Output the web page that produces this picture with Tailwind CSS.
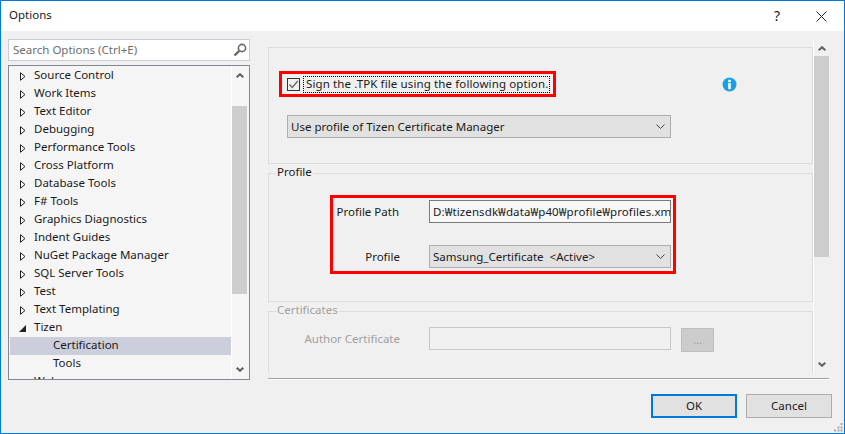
<!DOCTYPE html>
<html lang="en">
<head>
  <meta charset="UTF-8" />
  <title>Options</title>
  <script src="https://cdn.jsdelivr.net/npm/@tailwindcss/browser@4"></script>
</head>
<body class="overflow-hidden bg-[#f0f0f0]">
  <div class="w-[845px] h-[434px] flex flex-col border border-[#0078d7] bg-[#f0f0f0] text-[11.5px] leading-[16px] text-[#1a1a1a] font-['Noto_Sans',sans-serif] overflow-hidden">

    <!-- Title bar -->
    <div class="h-[30px] shrink-0 bg-white flex items-center pl-[8px]">
      <span class="flex-1 -translate-y-px">Options</span>
      <span class="text-[14px] w-[10px] mr-[34px] text-center">?</span>
      <svg class="mr-[17px]" width="11" height="11" viewBox="0 0 11 11" fill="none" stroke="#222" stroke-width="1"><path d="M0.5 0.5L10.5 10.5M10.5 0.5L0.5 10.5"/></svg>
    </div>

    <!-- Main -->
    <div class="h-[349px] shrink-0 flex">
      <!-- Left column -->
      <div class="w-[249px] ml-[7px] pt-[8px] shrink-0 flex flex-col">
        <div class="w-[242px] h-[22px] bg-white border border-[#c8ccd4] flex items-center pl-[4px] pr-[2px] justify-between text-[#6d6d6d]">
          <span>Search Options (Ctrl+E)</span>
          <svg width="14" height="14" viewBox="0 0 14 14" fill="none" stroke="#6a6a6a"><circle cx="9" cy="5" r="3.6" stroke-width="1.6"/><path d="M6.2 7.8L1.5 12.5" stroke-width="2.4"/></svg>
        </div>
        <div class="w-[242px] h-[315px] mt-[4px] border border-[#828790] bg-[#f5f5f5] flex overflow-hidden">
          <!-- Tree -->
          <div class="w-[222px] pl-[1px] pt-[1px] shrink-0">
            <div class="h-[18px] flex items-center"><svg class="ml-[10px] mr-[8px]" width="6" height="9" viewBox="0 0 6 9" fill="none" stroke="#222"><path d="M0.5 0.7L5 4.5L0.5 8.3Z"/></svg><span class="-translate-y-px">Source Control</span></div>
            <div class="h-[18px] flex items-center"><svg class="ml-[10px] mr-[8px]" width="6" height="9" viewBox="0 0 6 9" fill="none" stroke="#222"><path d="M0.5 0.7L5 4.5L0.5 8.3Z"/></svg><span class="-translate-y-px">Work Items</span></div>
            <div class="h-[18px] flex items-center"><svg class="ml-[10px] mr-[8px]" width="6" height="9" viewBox="0 0 6 9" fill="none" stroke="#222"><path d="M0.5 0.7L5 4.5L0.5 8.3Z"/></svg><span class="-translate-y-px">Text Editor</span></div>
            <div class="h-[18px] flex items-center"><svg class="ml-[10px] mr-[8px]" width="6" height="9" viewBox="0 0 6 9" fill="none" stroke="#222"><path d="M0.5 0.7L5 4.5L0.5 8.3Z"/></svg><span class="-translate-y-px">Debugging</span></div>
            <div class="h-[18px] flex items-center"><svg class="ml-[10px] mr-[8px]" width="6" height="9" viewBox="0 0 6 9" fill="none" stroke="#222"><path d="M0.5 0.7L5 4.5L0.5 8.3Z"/></svg><span class="-translate-y-px">Performance Tools</span></div>
            <div class="h-[18px] flex items-center"><svg class="ml-[10px] mr-[8px]" width="6" height="9" viewBox="0 0 6 9" fill="none" stroke="#222"><path d="M0.5 0.7L5 4.5L0.5 8.3Z"/></svg><span class="-translate-y-px">Cross Platform</span></div>
            <div class="h-[18px] flex items-center"><svg class="ml-[10px] mr-[8px]" width="6" height="9" viewBox="0 0 6 9" fill="none" stroke="#222"><path d="M0.5 0.7L5 4.5L0.5 8.3Z"/></svg><span class="-translate-y-px">Database Tools</span></div>
            <div class="h-[18px] flex items-center"><svg class="ml-[10px] mr-[8px]" width="6" height="9" viewBox="0 0 6 9" fill="none" stroke="#222"><path d="M0.5 0.7L5 4.5L0.5 8.3Z"/></svg><span class="-translate-y-px">F# Tools</span></div>
            <div class="h-[18px] flex items-center"><svg class="ml-[10px] mr-[8px]" width="6" height="9" viewBox="0 0 6 9" fill="none" stroke="#222"><path d="M0.5 0.7L5 4.5L0.5 8.3Z"/></svg><span class="-translate-y-px">Graphics Diagnostics</span></div>
            <div class="h-[18px] flex items-center"><svg class="ml-[10px] mr-[8px]" width="6" height="9" viewBox="0 0 6 9" fill="none" stroke="#222"><path d="M0.5 0.7L5 4.5L0.5 8.3Z"/></svg><span class="-translate-y-px">Indent Guides</span></div>
            <div class="h-[18px] flex items-center"><svg class="ml-[10px] mr-[8px]" width="6" height="9" viewBox="0 0 6 9" fill="none" stroke="#222"><path d="M0.5 0.7L5 4.5L0.5 8.3Z"/></svg><span class="-translate-y-px">NuGet Package Manager</span></div>
            <div class="h-[18px] flex items-center"><svg class="ml-[10px] mr-[8px]" width="6" height="9" viewBox="0 0 6 9" fill="none" stroke="#222"><path d="M0.5 0.7L5 4.5L0.5 8.3Z"/></svg><span class="-translate-y-px">SQL Server Tools</span></div>
            <div class="h-[18px] flex items-center"><svg class="ml-[10px] mr-[8px]" width="6" height="9" viewBox="0 0 6 9" fill="none" stroke="#222"><path d="M0.5 0.7L5 4.5L0.5 8.3Z"/></svg><span class="-translate-y-px">Test</span></div>
            <div class="h-[18px] flex items-center"><svg class="ml-[10px] mr-[8px]" width="6" height="9" viewBox="0 0 6 9" fill="none" stroke="#222"><path d="M0.5 0.7L5 4.5L0.5 8.3Z"/></svg><span class="-translate-y-px">Text Templating</span></div>
            <div class="h-[18px] flex items-center"><svg class="ml-[9px] mr-[8px]" width="7" height="7" viewBox="0 0 7 7" fill="#222"><path d="M7 0V7H0Z"/></svg><span class="-translate-y-px">Tizen</span></div>
            <div class="h-[18px] flex items-center bg-[#cccedb] pl-[43px]"><span class="-translate-y-px">Certification</span></div>
            <div class="h-[18px] flex items-center pl-[43px]"><span class="-translate-y-px">Tools</span></div>
            <div class="h-[18px] flex items-center"><span class="ml-[24px] -translate-y-px">Web</span></div>
          </div>
          <!-- Tree scrollbar -->
          <div class="w-[17px] shrink-0 border-l border-white pr-[1px] flex flex-col items-stretch">
            <div class="h-[18px] pt-[7px] flex justify-center shrink-0"><svg width="8" height="5" viewBox="0 0 8 5" fill="none" stroke="#606060" stroke-width="2"><path d="M0.7 4.3L4 1.2L7.3 4.3"/></svg></div>
            <div class="h-[188px] mt-[22px] bg-[#cdcdcd] shrink-0"></div>
            <div class="h-[66px] shrink-0"></div>
            <div class="h-[18px] flex justify-center items-center shrink-0"><svg width="8" height="5" viewBox="0 0 8 5" fill="none" stroke="#606060" stroke-width="2"><path d="M0.7 0.7L4 3.8L7.3 0.7"/></svg></div>
          </div>
        </div>
      </div>

      <!-- Right column -->
      <div class="w-[561px] ml-[11px] pt-[8px] shrink-0">
        <div class="h-[334px] flex">
          <div class="w-[545px] shrink-0 pt-[8px] overflow-hidden">
            <!-- Signing group -->
            <div class="h-[117px] border border-[#dcdcdc] pl-[10px] pt-[23px]">
              <div class="flex items-center">
                <div class="w-[277px] h-[26px] border-[3px] border-[#ff0000] flex items-center pl-[5px]">
                  <div class="w-[13px] h-[13px] border border-[#333] bg-[#f0f0f0] flex items-center justify-center shrink-0">
                    <svg width="11" height="11" viewBox="0 0 11 11" fill="none" stroke="#666" stroke-width="1.3"><path d="M1.5 5.5L4.2 8.5L9.8 2"/></svg>
                  </div>
                  <div class="ml-[3px] pl-[2px] h-[17px] w-[247px] border border-dotted border-black whitespace-nowrap leading-[14px] tracking-[0.12px]">Sign the .TPK file using the following option.</div>
                </div>
                <svg class="ml-[166px]" width="15" height="15" viewBox="0 0 15 15"><circle cx="7.5" cy="7.5" r="7" fill="#1ba1e2"/><rect x="6.2" y="2.8" width="2.6" height="2.4" fill="#fff"/><rect x="6.2" y="6.2" width="2.6" height="6" fill="#fff"/></svg>
              </div>
              <div class="ml-[8px] mt-[18px] w-[384px] h-[23px] border border-[#adadad] bg-[#e1e1e1] flex items-center justify-between pl-[3px] pr-[5px]">
                <span>Use profile of Tizen Certificate Manager</span>
                <svg width="9" height="5" viewBox="0 0 9 5" fill="none" stroke="#444"><path d="M0.5 0.5L4.5 4.5L8.5 0.5"/></svg>
              </div>
            </div>

            <!-- Profile group -->
            <div class="h-[129px] mt-[9px] border border-[#dcdcdc]">
              <div class="ml-[7px] -mt-[9px] w-fit px-[1px] bg-[#f0f0f0] leading-[14px] pb-[2px]">Profile</div>
              <div class="ml-[61px] mt-[14px] w-[346px] h-[79px] border-[3px] border-[#ff0000] pt-[2px]">
                <div class="flex items-center">
                  <div class="w-[66px] text-right whitespace-nowrap">Profile Path</div>
                  <div class="ml-[30px] w-[242px] h-[23px] border border-[#7a7a7a] bg-[#f7f7f7] flex items-center pl-[3px] overflow-hidden whitespace-nowrap tracking-[0.1px]"><span>D:₩tizensdk₩data₩p40₩profile₩profiles.xml</span></div>
                </div>
                <div class="flex items-center mt-[22px]">
                  <div class="w-[67px] text-right">Profile</div>
                  <div class="ml-[29px] w-[242px] h-[23px] border border-[#adadad] bg-[#e1e1e1] flex items-center justify-between pl-[3px] pr-[5px]">
                    <span>Samsung_Certificate&nbsp; &lt;Active&gt;</span>
                    <svg width="9" height="5" viewBox="0 0 9 5" fill="none" stroke="#444"><path d="M0.5 0.5L4.5 4.5L8.5 0.5"/></svg>
                  </div>
                </div>
              </div>
            </div>

            <!-- Certificates group -->
            <div class="h-[120px] mt-[9px] border border-[#dcdcdc] text-[#a0a0a0]">
              <div class="ml-[7px] -mt-[9px] w-fit px-[1px] bg-[#f0f0f0] leading-[14px] pb-[2px]">Certificates</div>
              <div class="flex items-start mt-[8px]">
                <div class="w-[131px] text-right mt-[4px] whitespace-nowrap">Author Certificate</div>
                <div class="ml-[29px] w-[242px] h-[23px] border border-[#c8c8c8] bg-[#f0f0f0]"></div>
                <div class="ml-[10px] mt-[1px] w-[33px] h-[24px] border border-[#bfbfbf] bg-[#cccccc] flex items-center justify-center">...</div>
              </div>
            </div>
          </div>
          <!-- Options scrollbar -->
          <div class="w-[16px] shrink-0 border-l border-white flex flex-col">
            <div class="h-[17px] pt-[7px] flex justify-center shrink-0"><svg width="8" height="5" viewBox="0 0 8 5" fill="none" stroke="#606060" stroke-width="2"><path d="M0.7 4.3L4 1.2L7.3 4.3"/></svg></div>
            <div class="h-[201px] bg-[#cdcdcd] shrink-0"></div>
            <div class="flex-1 flex items-end justify-center pb-[6px]"><svg width="8" height="5" viewBox="0 0 8 5" fill="none" stroke="#606060" stroke-width="2"><path d="M0.7 0.7L4 3.8L7.3 0.7"/></svg></div>
          </div>
        </div>
        <div class="mt-[5px] h-[2px] border-t border-b border-t-[#a0a0a0] border-b-white"></div>
      </div>
    </div>

    <!-- Footer -->
    <div class="flex-1 relative flex justify-end items-start pt-[14px] pr-[12px]">
      <button class="w-[86px] h-[24px] border-2 border-[#0078d7] bg-[#e1e1e1] flex items-center justify-center">OK</button>
      <button class="w-[86px] h-[24px] ml-[9px] border border-[#adadad] bg-[#e1e1e1] flex items-center justify-center">Cancel</button>
      <svg class="absolute right-[1px] bottom-[1px]" width="9" height="9" viewBox="0 0 9 9" fill="#a8a8a8"><rect x="6.5" y="0" width="2" height="2"/><rect x="3.5" y="3.5" width="2" height="2"/><rect x="6.5" y="3.5" width="2" height="2"/><rect x="0" y="6.5" width="2" height="2"/><rect x="3.5" y="6.5" width="2" height="2"/><rect x="6.5" y="6.5" width="2" height="2"/></svg>
    </div>
  </div>
</body>
</html>
